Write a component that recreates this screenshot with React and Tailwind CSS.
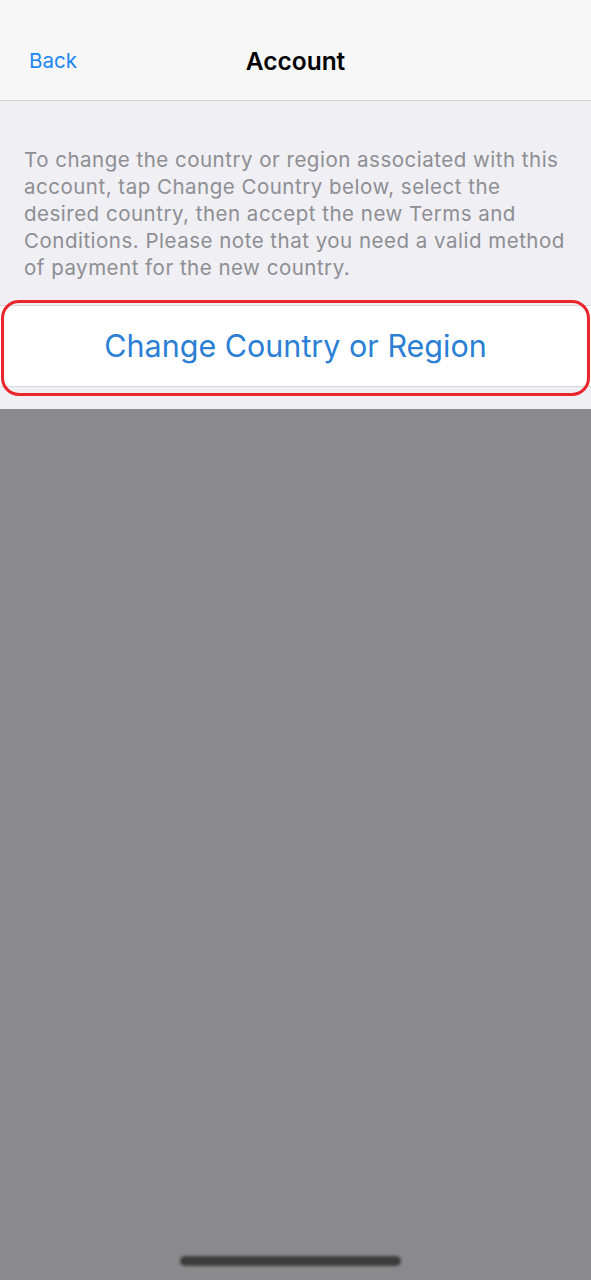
export default function App() {
  return (
    <div className="relative flex h-[1280px] w-full flex-col bg-[#8a8a8c] font-['Inter',Arial,sans-serif]">
      {/* Nav bar */}
      <div className="relative flex h-[101px] shrink-0 items-center justify-center border-b border-[#d2d2d6] bg-[#f7f7f8] pt-[22px]">
        <span className="absolute left-[29px] top-[48px] text-[20.5px] leading-[26px] text-[#1a86f0]">Back</span>
        <span className="text-[24.5px] font-semibold text-black">Account</span>
      </div>

      {/* Content */}
      <div className="flex flex-col bg-[#efeff4] pb-[22px] pt-[45px]">
        <p className="px-[24px] text-[20.5px] leading-[27px] tracking-[0.5px] text-[#8e8e93]">
          To change the country or region associated with this
          <br />
          account, tap Change Country below, select the
          <br />
          desired country, then accept the new Terms and
          <br />
          Conditions. Please note that you need a valid method
          <br />
          of payment for the new country.
        </p>

        <div className="relative mt-[24px]">
          <div className="flex h-[82px] items-center justify-center border-y border-[#d8d8dc] bg-white">
            <span className="text-[30.5px] text-[#2b7fd4]">Change Country or Region</span>
          </div>
          {/* highlight annotation */}
          <div className="pointer-events-none absolute -bottom-[9px] left-[1px] right-[1px] -top-[5px] rounded-[18px] border-[3px] border-[#e8262b]" />
        </div>
      </div>

      {/* Home indicator */}
      <div className="absolute bottom-[14px] left-[180px] h-[10px] w-[221px] rounded-full bg-[#3d3d3d] blur-[1.5px]" />
    </div>
  )
}
